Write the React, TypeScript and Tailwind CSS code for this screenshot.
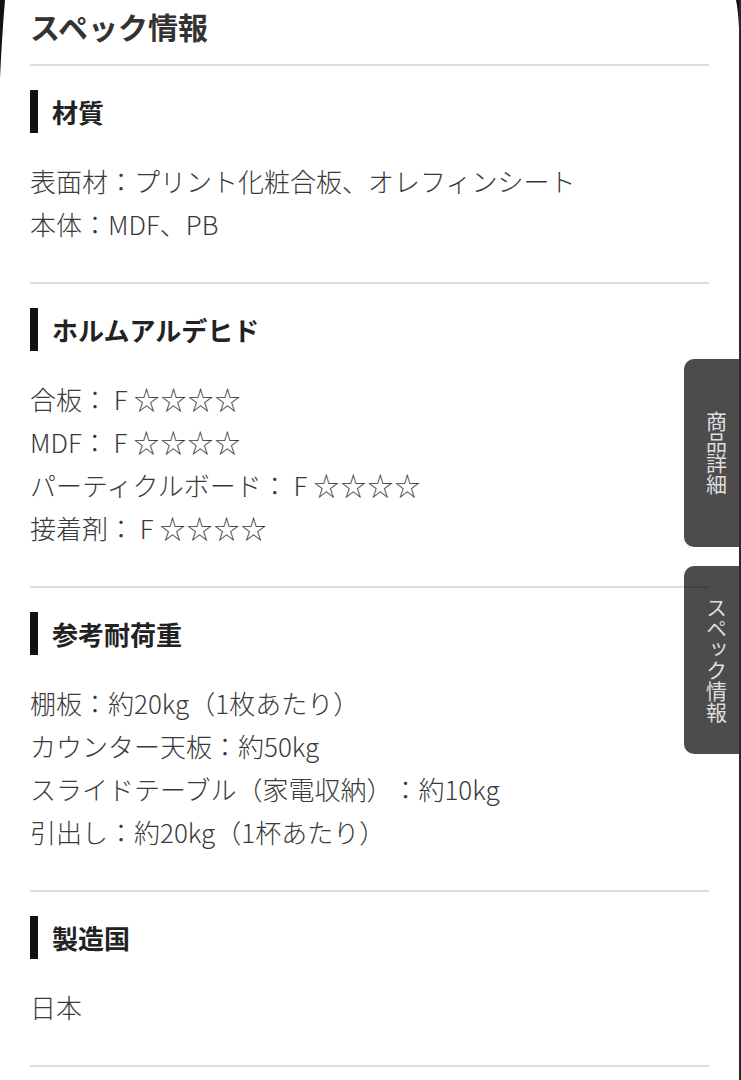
import React from 'react';

interface SpecSection {
  title: string;
  lines: string[];
}

const sections: SpecSection[] = [
  { title: '材質', lines: ['表面材：プリント化粧合板、オレフィンシート', '本体：MDF、PB'] },
  {
    title: 'ホルムアルデヒド',
    lines: ['合板： F☆☆☆☆', 'MDF： F☆☆☆☆', 'パーティクルボード： F☆☆☆☆', '接着剤： F☆☆☆☆'],
  },
  {
    title: '参考耐荷重',
    lines: [
      '棚板：約20kg（1枚あたり）',
      'カウンター天板：約50kg',
      'スライドテーブル（家電収納）：約10kg',
      '引出し：約20kg（1杯あたり）',
    ],
  },
  { title: '製造国', lines: ['日本'] },
];

const font = { fontFamily: "'Noto Sans CJK JP', 'Noto Sans', sans-serif" };

// stars get a bit of extra room, like the reference rendering
const renderLine = (line: string) => {
  const i = line.indexOf('☆');
  if (i < 0) return line;
  return (
    <>
      {line.slice(0, i)}
      <span className="ml-[6px] tracking-[1px]">{line.slice(i)}</span>
    </>
  );
};

const SideTab: React.FC<{ label: string }> = ({ label }) => (
  <div className="h-[188px] w-[55px] rounded-l-[10px] bg-black/70 flex items-center justify-center pl-[9px]">
    <span className="[writing-mode:vertical-rl] text-[21px] leading-[21px] text-[#dedede]">
      {label}
    </span>
  </div>
);

const App: React.FC = () => {
  return (
    <div
      className="relative h-[1080px] overflow-hidden bg-white border-r-2 border-[#2a2a2a] [text-spacing-trim:space-all]"
      style={font}
    >
      {/* phone frame corners */}
      <svg className="absolute top-0 left-0" width="8" height="80" viewBox="0 0 8 80">
        <path d="M0 0 L5 0 Q2 35 0 78 Z" fill="#111" />
      </svg>
      <svg className="absolute top-0 right-0" width="5" height="28" viewBox="0 0 5 28">
        <path d="M2 0 L5 0 L5 28 Q4 9 2 0 Z" fill="#111" />
      </svg>

      <div className="px-[30px]">
        <h1 className="h-[64px] leading-[52px] text-[30px] font-bold text-[#333]">スペック情報</h1>

        {sections.map((s) => (
          <section key={s.title} className="border-t-2 border-[#dddddd] pt-[24px] pb-[37px]">
            <div className="flex items-center h-[43px]">
              <div className="w-[8px] h-[43px] bg-[#111]" />
              <h2 className="ml-[14px] text-[26px] font-bold text-[#222] leading-[43px]">{s.title}</h2>
            </div>
            <div className="mt-[26px]">
              {s.lines.map((l) => (
                <p key={l} className="text-[26px] leading-[43px] text-[#3a3a3a] font-light">
                  {renderLine(l)}
                </p>
              ))}
            </div>
          </section>
        ))}
        <div className="border-t-2 border-[#dddddd]" />
      </div>

      {/* floating side tabs */}
      <div className="absolute right-0 top-[359px] flex flex-col gap-[19px]">
        <SideTab label="商品詳細" />
        <SideTab label="スペック情報" />
      </div>
    </div>
  );
};

export default App;
